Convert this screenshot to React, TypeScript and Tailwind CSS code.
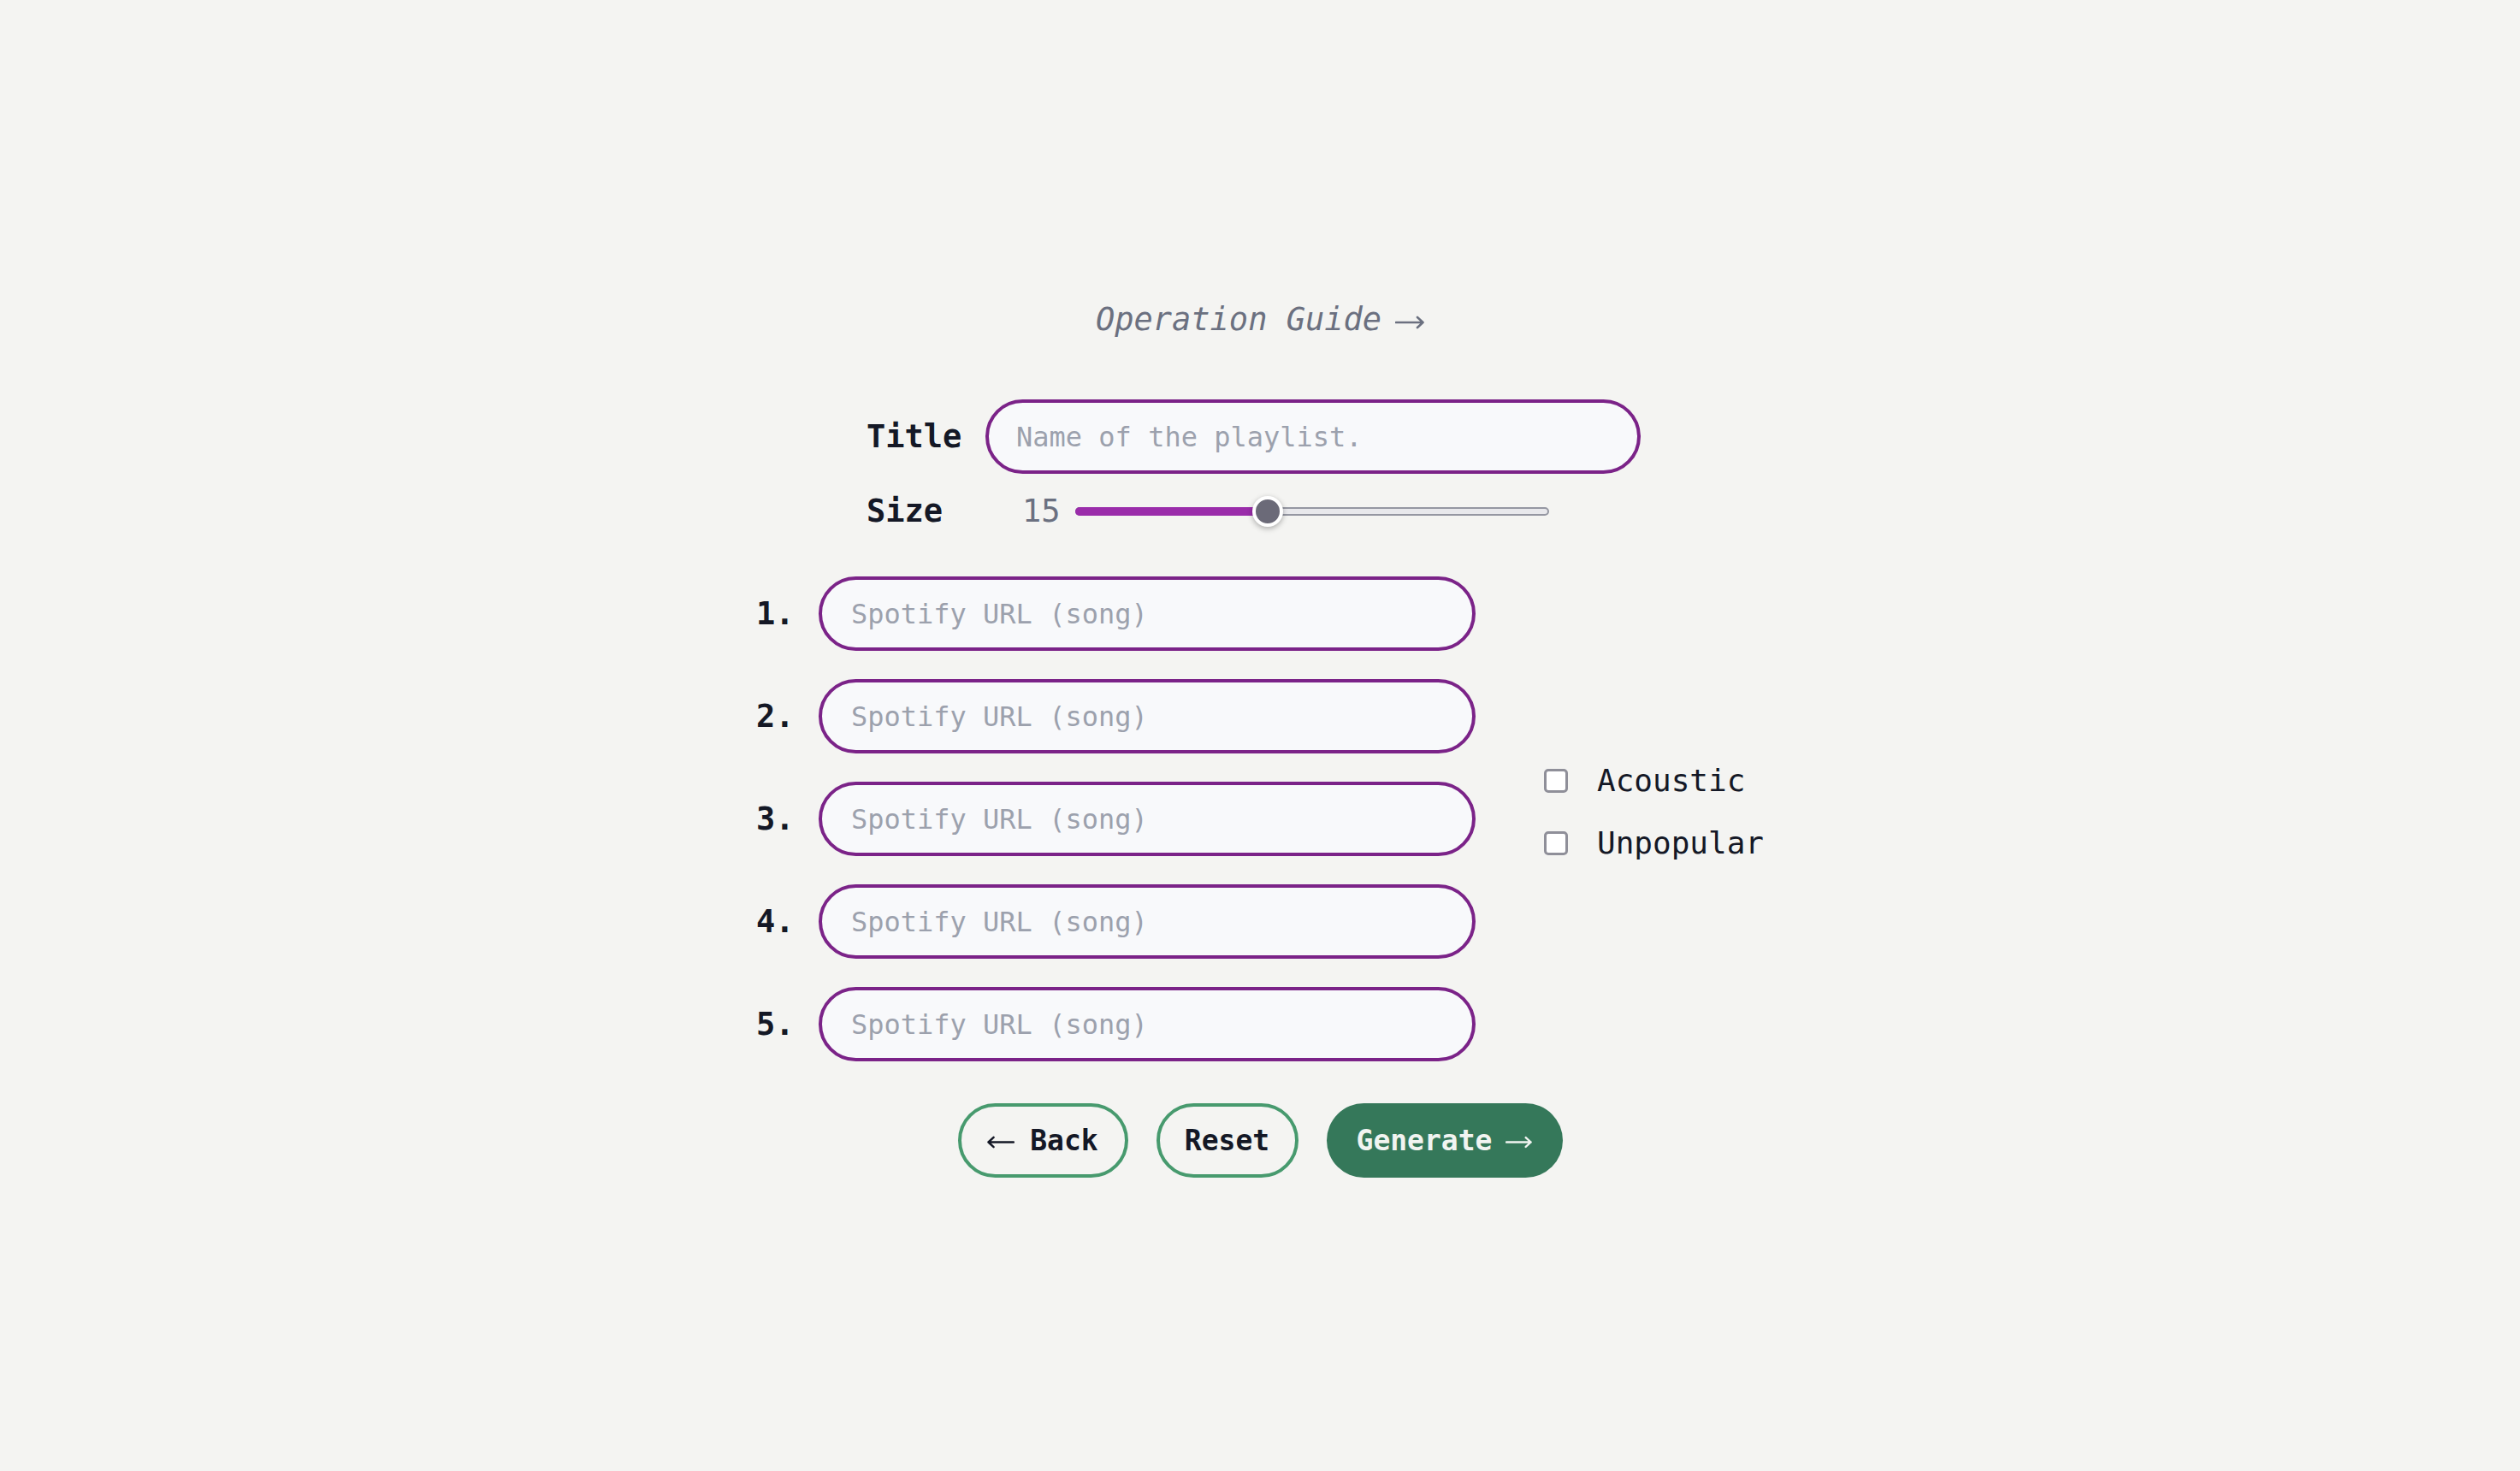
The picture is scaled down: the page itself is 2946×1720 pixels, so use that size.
import { useState } from 'react';

const mono = "font-['DejaVu_Sans_Mono',monospace]";

function Arrow({ left = false, className = '' }: { left?: boolean; className?: string }) {
  return (
    <svg viewBox="0 0 34 16" className={className} fill="none" stroke="currentColor" strokeWidth={2.6} strokeLinecap="round" strokeLinejoin="round">
      {left ? (
        <path d="M33 8H1.5M8 2L1.5 8L8 14" />
      ) : (
        <path d="M1 8h31.5M26 2l6.5 6l-6.5 6" />
      )}
    </svg>
  );
}

function SongInput({ index }: { index: number }) {
  return (
    <div className="flex items-center">
      <span className="w-[73px] text-[37px] leading-[44px] font-bold text-[#141826]">{index}.</span>
      <input
        type="text"
        placeholder="Spotify URL (song)"
        className="w-[768px] h-[87px] rounded-full border-[4px] border-[#7b2388] bg-[#f8f9fb] pl-[34px] text-[32px] text-[#141826] placeholder:text-[#9ca1ad] outline-none"
      />
    </div>
  );
}

function Checkbox({ label }: { label: string }) {
  const [checked, setChecked] = useState(false);
  return (
    <label className="flex items-center gap-[34px] cursor-pointer">
      <span
        onClick={() => setChecked(!checked)}
        className={`w-[28px] h-[28px] rounded-[5px] border-[3px] border-[#8f8f99] ${checked ? 'bg-[#7b2388]' : 'bg-white'}`}
      />
      <span className="text-[36px] leading-[44px] text-[#141826]">{label}</span>
    </label>
  );
}

export default function App() {
  const [size] = useState(15);
  const fill = 225;

  return (
    <div className={`min-h-screen bg-[#f4f4f2] flex flex-col items-center pt-[352px] ${mono}`}>
      <a href="#" className="flex items-center gap-[16px] text-[37px] leading-[44px] italic text-[#6b7080]">
        <span>Operation Guide</span>
        <Arrow className="w-[34px] h-[16px] mt-[6px]" />
      </a>

      <div className="w-[920px] mt-[71px] flex flex-col">
        <div className="flex items-center">
          <span className="w-[139px] text-[37px] leading-[44px] font-bold text-[#141826]">Title</span>
          <input
            type="text"
            placeholder="Name of the playlist."
            className="w-[766px] h-[87px] rounded-full border-[4px] border-[#7b2388] bg-[#f8f9fb] pl-[32px] text-[32px] text-[#141826] placeholder:text-[#9ca1ad] outline-none"
          />
        </div>
        <div className="flex items-center mt-[22px] h-[44px]">
          <span className="w-[182px] text-[37px] leading-[44px] font-bold text-[#141826]">Size</span>
          <span className="w-[62px] text-[37px] leading-[44px] text-[#6b7080]">{size}</span>
          <div className="relative w-[554px] h-[10px] rounded-full border-[2px] border-[#9597a2] bg-[#e8e8ec]">
            <div className="absolute -left-[2px] -top-[2px] h-[10px] rounded-full bg-[#9a2caa]" style={{ width: fill }} />
            <div
              className="absolute top-1/2 w-[36px] h-[36px] -translate-x-1/2 -translate-y-1/2 rounded-full border-[4px] border-white bg-[#6b6a78] shadow-[0_2px_6px_rgba(0,0,0,0.3)]"
              style={{ left: fill - 2 }}
            />
          </div>
        </div>
      </div>

      <div className="mt-[54px] flex items-center gap-[80px]">
        <div className="flex flex-col gap-[33px]">
          {[1, 2, 3, 4, 5].map(i => (
            <SongInput key={i} index={i} />
          ))}
        </div>
        <div className="flex flex-col gap-[29px] pb-[16px]">
          <Checkbox label="Acoustic" />
          <Checkbox label="Unpopular" />
        </div>
      </div>

      <div className="mt-[49px] flex items-center gap-[33px]">
        <button className="w-[199px] h-[87px] rounded-full border-[4px] border-[#479a6e] text-[33px] font-bold text-[#141826] flex items-center justify-center gap-[18px]">
          <Arrow left className="w-[32px] h-[15px] mt-[4px]" />
          <span>Back</span>
        </button>
        <button className="w-[166px] h-[87px] rounded-full border-[4px] border-[#479a6e] text-[33px] font-bold text-[#141826]">
          Reset
        </button>
        <button className="w-[276px] h-[87px] rounded-full bg-[#35785a] text-[33px] font-bold text-[#f1f4f1] flex items-center justify-center gap-[16px]">
          <span>Generate</span>
          <Arrow className="w-[31px] h-[15px] mt-[4px]" />
        </button>
      </div>
    </div>
  );
}
